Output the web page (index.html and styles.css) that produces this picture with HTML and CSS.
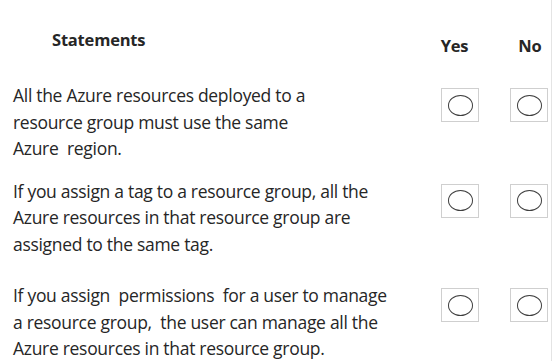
FILE: index.html
```html
<!DOCTYPE html>
<html lang="en">
<head>
    <meta charset="UTF-8">
    <meta name="viewport" content="width=device-width, initial-scale=1.0">
    <title>Statements</title>
    <link rel="stylesheet" href="styles.css">
</head>
<body>
    <div class="sheet">
        <div class="head">
            <div class="head-title">Statements</div>
            <div class="head-col">Yes</div>
            <div class="head-col head-no">No</div>
        </div>

        <div class="row">
            <div class="statement">All the Azure resources deployed to a<br>resource group must use the same<br>Azure&nbsp; region.</div>
            <div class="choices">
                <span class="box"><span class="radio"></span></span>
                <span class="box"><span class="radio"></span></span>
            </div>
        </div>

        <div class="row">
            <div class="statement">If you assign a tag to a resource group, all the<br>Azure resources in that resource group are<br>assigned to the same tag.</div>
            <div class="choices">
                <span class="box"><span class="radio"></span></span>
                <span class="box"><span class="radio"></span></span>
            </div>
        </div>

        <div class="row row-wide">
            <div class="statement">If you assign&nbsp; permissions&nbsp; for a user to manage<br>a resource group,&nbsp; the user can manage all the<br>Azure resources in that resource group.</div>
            <div class="choices">
                <span class="box"><span class="radio"></span></span>
                <span class="box"><span class="radio"></span></span>
            </div>
        </div>
    </div>
</body>
</html>
```

FILE: styles.css
```css
body, html {
    margin: 0;
    padding: 0;
    background-color: #ffffff;
    font-family: 'Open Sans', 'DejaVu Sans', sans-serif;
    color: #262626;
}

.sheet {
    width: 552px;
    height: 361px;
    overflow: hidden;
    border-right: 1px solid #e4e4e4;
    padding: 29px 0 0 13px;
    box-sizing: border-box;
}

.head {
    display: flex;
    align-items: flex-start;
    height: 22px;
    font-weight: bold;
    font-size: 16.5px;
    line-height: 22px;
    letter-spacing: -0.2px;
}

.head-title {
    width: 432px;
    padding-left: 39px;
    box-sizing: border-box;
}

.head-col {
    margin-top: 6px;
    width: 33px;
}

.head-no {
    margin-left: 45px;
}

.row {
    display: flex;
    align-items: flex-start;
    margin-top: 31px;
}

.row + .row {
    margin-top: 16px;
}

.row-wide + .row,
.row + .row-wide {
    margin-top: 25px;
}

.statement {
    width: 428px;
    font-size: 17.5px;
    line-height: 26.5px;
    letter-spacing: -0.3px;
}

.choices {
    display: flex;
    gap: 31px;
    margin-top: 6px;
}

.box {
    display: flex;
    align-items: center;
    justify-content: center;
    width: 38px;
    height: 34px;
    border: 1px solid #cfcfcf;
    box-sizing: border-box;
}

.radio {
    width: 23px;
    height: 19px;
    border: 1.5px solid #3f3f3f;
    border-radius: 50%;
}
```
